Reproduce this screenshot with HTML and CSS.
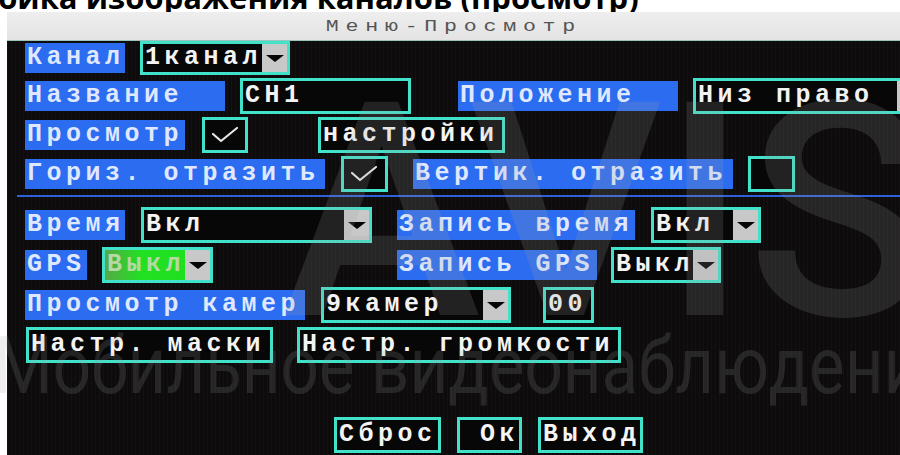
FILE: index.html
```html
<!DOCTYPE html>
<html lang="ru">
<head>
<meta charset="utf-8">
<title>Меню-Просмотр</title>
<link rel="stylesheet" href="styles.css">
</head>
<body>
  <div class="doc-title"><span>Настройка изображения каналов (просмотр)</span></div>

  <div class="osd">
    <div class="osd-head"><span class="osd-caption">Меню-Просмотр</span></div>

    <div class="osd-body">
      <div class="group">
        <div class="row row--first">
          <div class="lbl w-100">Канал</div>
          <div class="box drop w-150 ml-15"><span class="val">1канал</span><span class="caret"></span></div>
        </div>
        <div class="row">
          <div class="lbl w-200">Название</div>
          <div class="box w-171 ml-15"><span class="val">CH1</span></div>
          <div class="lbl w-220 ml-47">Положение</div>
          <div class="box drop w-232 ml-15"><span class="val">Низ право</span><span class="caret"></span></div>
        </div>
        <div class="row">
          <div class="lbl w-160">Просмотр</div>
          <div class="chk w-46 ml-17"><svg viewBox="0 0 40 30" width="40" height="30"><polyline points="8,14 16,21 32,8"/></svg></div>
          <div class="btn w-187 ml-70">настройки</div>
        </div>
        <div class="row">
          <div class="lbl w-300">Гориз. отразить</div>
          <div class="chk w-47 ml-16"><svg viewBox="0 0 41 30" width="41" height="30"><polyline points="8,14 16,21 32,8"/></svg></div>
          <div class="lbl w-320 ml-25">Вертик. отразить</div>
          <div class="chk w-47 ml-15"></div>
        </div>
      </div>

      <div class="rule"></div>

      <div class="group group--lower">
        <div class="row">
          <div class="lbl w-100">Время</div>
          <div class="box drop w-231 ml-16"><span class="val">Вкл</span><span class="caret"></span></div>
          <div class="lbl w-238 ml-25">Запись время</div>
          <div class="box drop w-110 ml-16"><span class="val">Вкл</span><span class="caret"></span></div>
        </div>
        <div class="row">
          <div class="lbl w-62">GPS</div>
          <div class="box drop w-111 ml-15"><span class="val val--active">Выкл</span><span class="caret"></span></div>
          <div class="lbl w-200 ml-184">Запись GPS</div>
          <div class="box drop w-110 ml-14"><span class="val">Выкл</span><span class="caret"></span></div>
        </div>
        <div class="row">
          <div class="lbl w-280">Просмотр камер</div>
          <div class="box drop w-190 ml-16"><span class="val">9камер</span><span class="caret"></span></div>
          <div class="box w-51 ml-32"><span class="val">00</span></div>
        </div>
        <div class="row">
          <div class="btn w-247 ml-1">Настр. маски</div>
          <div class="btn w-324 ml-24">Настр. громкости</div>
        </div>
      </div>

      <div class="actions">
        <div class="btn w-107">Сброс</div>
        <div class="btn btn--ok w-65 ml-16">Ок</div>
        <div class="btn w-105 ml-16">Выход</div>
      </div>
    </div>
  </div>

  <div class="watermark">
    <span class="wm-brand">AVIS</span>
    <span class="wm-tagline">Мобильное видеонаблюдение</span>
  </div>
</body>
</html>
```

FILE: styles.css
```css
* {
  box-sizing: border-box;
}

body {
  margin: 0;
  width: 900px;
  height: 455px;
  overflow: hidden;
  position: relative;
  background: #fff;
  font-family: "Liberation Mono", monospace;
}

/* article heading, mostly scrolled off the top */
.doc-title {
  height: 12px;
  overflow: hidden;
  white-space: nowrap;
}

.doc-title span {
  display: block;
  margin: -18px 0 0 -97px;
  font: 700 31px/31px "Open Sans", sans-serif;
  color: #000;
}

/* on-screen display of the recorder */
.osd {
  position: relative;
  margin-left: 7px;
  height: 443px;
  overflow: hidden;
  background:
    repeating-linear-gradient(90deg, rgba(255, 255, 255, 0.025) 0 1px, transparent 1px 4px),
    #0d0b0c;
}

.osd-head {
  height: 29px;
  padding-top: 2px;
  text-align: center;
  background: linear-gradient(#eeeeee, #e3e3e3);
  border-bottom: 1px solid #9cc4bc;
}

.osd-caption {
  display: inline-block;
  font: 400 16px/26px "Liberation Mono", monospace;
  letter-spacing: 5px;
  color: #555;
  transform: scaleX(1.35);
}

.osd-body {
  display: flex;
  flex-direction: column;
  padding-left: 18px;
}

.group {
  display: flex;
  flex-direction: column;
  gap: 3px;
}

.group--lower {
  gap: 4px;
  margin-top: 10px;
}

.rule {
  height: 2px;
  margin: 3px 0 0 -8px;
  background: #2f60da;
}

.row {
  display: flex;
  align-items: center;
  height: 36px;
}

.row > * {
  flex: none;
}

.row--first {
  height: 34px;
}

/* blue caption cells */
.lbl {
  height: 30px;
  padding-left: 2px;
  background: #2b6cf1;
  color: #dfe8ff;
  font: 700 25px/30px "Liberation Mono", monospace;
  letter-spacing: 4.5px;
  white-space: nowrap;
  overflow: hidden;
}

/* cyan-framed fields */
.box,
.chk,
.btn {
  height: 36px;
  border: 3px solid #41e2c9;
  background: #070707;
}

.row--first .box {
  height: 34px;
}

.box {
  display: flex;
}

.val {
  flex: 1;
  height: 100%;
  padding-left: 2px;
  color: #f3f3f3;
  font: 700 25px/30px "Liberation Mono", monospace;
  letter-spacing: 4.5px;
  white-space: nowrap;
  overflow: hidden;
}

.row--first .val {
  line-height: 28px;
}

.val--active {
  color: #b4d8a6;
  background: linear-gradient(90deg, #55a948, #22e023 45%, #1fe01f);
}

.caret {
  flex: none;
  width: 25px;
  height: 100%;
  display: flex;
  align-items: center;
  justify-content: center;
  background: #c8c8c8;
}

.caret::before {
  content: "";
  border-left: 9px solid transparent;
  border-right: 9px solid transparent;
  border-top: 7px solid #050505;
}

.chk svg {
  display: block;
}

.chk polyline {
  fill: none;
  stroke: #e6e6e6;
  stroke-width: 2.2;
  stroke-linecap: round;
  stroke-linejoin: round;
}

.btn {
  padding-left: 2px;
  color: #f4f4f4;
  font: 700 25px/30px "Liberation Mono", monospace;
  letter-spacing: 4.5px;
  white-space: nowrap;
  overflow: hidden;
}

.btn--ok {
  padding-left: 20px;
}

.actions {
  display: flex;
  margin: 54px 0 0 309px;
}

.actions > * {
  flex: none;
}

/* widths */
.w-46 { width: 46px; }
.w-47 { width: 47px; }
.w-51 { width: 51px; }
.w-62 { width: 62px; }
.w-65 { width: 65px; }
.w-100 { width: 100px; }
.w-105 { width: 105px; }
.w-107 { width: 107px; }
.w-110 { width: 110px; }
.w-111 { width: 111px; }
.w-150 { width: 150px; }
.w-160 { width: 160px; }
.w-171 { width: 171px; }
.w-187 { width: 187px; }
.w-190 { width: 190px; }
.w-200 { width: 200px; }
.w-220 { width: 220px; }
.w-231 { width: 231px; }
.w-232 { width: 232px; }
.w-238 { width: 238px; }
.w-247 { width: 247px; }
.w-280 { width: 280px; }
.w-300 { width: 300px; }
.w-320 { width: 320px; }
.w-324 { width: 324px; }

/* spacing */
.ml-1 { margin-left: 1px; }
.ml-14 { margin-left: 14px; }
.ml-15 { margin-left: 15px; }
.ml-16 { margin-left: 16px; }
.ml-17 { margin-left: 17px; }
.ml-24 { margin-left: 24px; }
.ml-25 { margin-left: 25px; }
.ml-32 { margin-left: 32px; }
.ml-47 { margin-left: 47px; }
.ml-70 { margin-left: 70px; }
.ml-184 { margin-left: 184px; }

/* translucent brand mark laid over the whole photo */
.watermark {
  position: absolute;
  inset: 0;
  pointer-events: none;
  color: rgba(160, 160, 160, 0.18);
  font-family: Roboto, sans-serif;
  white-space: nowrap;
}

.wm-brand {
  position: absolute;
  left: 282px;
  top: 63px;
  font-size: 300px;
  line-height: 300px;
  font-weight: 500;
}

.wm-tagline {
  position: absolute;
  left: -6px;
  top: 326px;
  font-size: 80px;
  line-height: 80px;
  font-weight: 400;
  transform: scaleX(0.84);
  transform-origin: left center;
}
```
